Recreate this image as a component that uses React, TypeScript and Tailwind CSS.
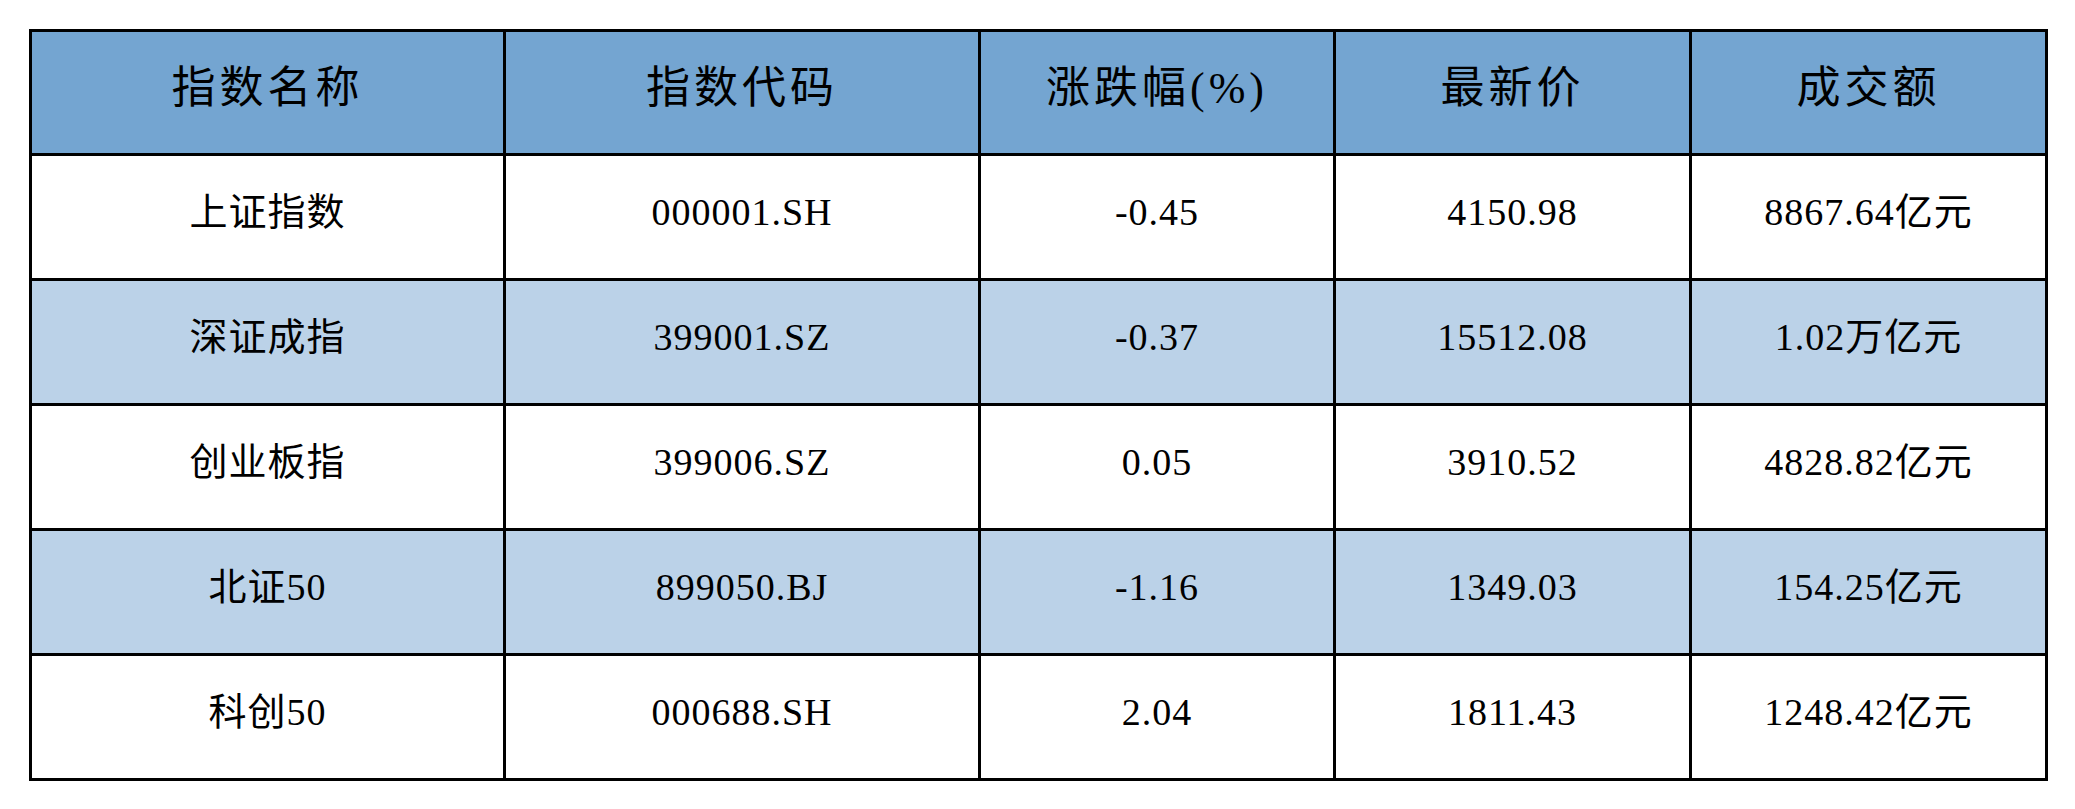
const headers = ['指数名称', '指数代码', '涨跌幅(%)', '最新价', '成交额'];

const rows = [
  ['上证指数', '000001.SH', '-0.45', '4150.98', '8867.64亿元'],
  ['深证成指', '399001.SZ', '-0.37', '15512.08', '1.02万亿元'],
  ['创业板指', '399006.SZ', '0.05', '3910.52', '4828.82亿元'],
  ['北证50', '899050.BJ', '-1.16', '1349.03', '154.25亿元'],
  ['科创50', '000688.SH', '2.04', '1811.43', '1248.42亿元'],
];

export default function App() {
  return (
    <div className="w-[2075px] h-[809px] bg-white pt-[29px] pl-[29px] font-['Liberation_Serif','Noto_Sans_CJK_SC',serif] text-black">
      <div className="grid w-[2019px] grid-cols-[474px_475px_355px_356px_356px] border-l-[3px] border-t-[3px] border-black">
        {headers.map((h) => (
          <div
            key={h}
            className="flex h-[124px] items-center justify-center border-r-[3px] border-b-[3px] border-black bg-[#74a5d1] pb-[8px] text-[44px] tracking-[4px]"
          >
            {h}
          </div>
        ))}
        {rows.map((row, i) =>
          row.map((cell, j) => (
            <div
              key={`${i}-${j}`}
              className={`flex h-[125px] items-center justify-center border-r-[3px] border-b-[3px] border-black pb-[10px] text-[38px] tracking-[1px] ${
                i % 2 === 1 ? 'bg-[#bbd2e8]' : 'bg-white'
              }`}
            >
              {cell}
            </div>
          ))
        )}
      </div>
    </div>
  );
}
